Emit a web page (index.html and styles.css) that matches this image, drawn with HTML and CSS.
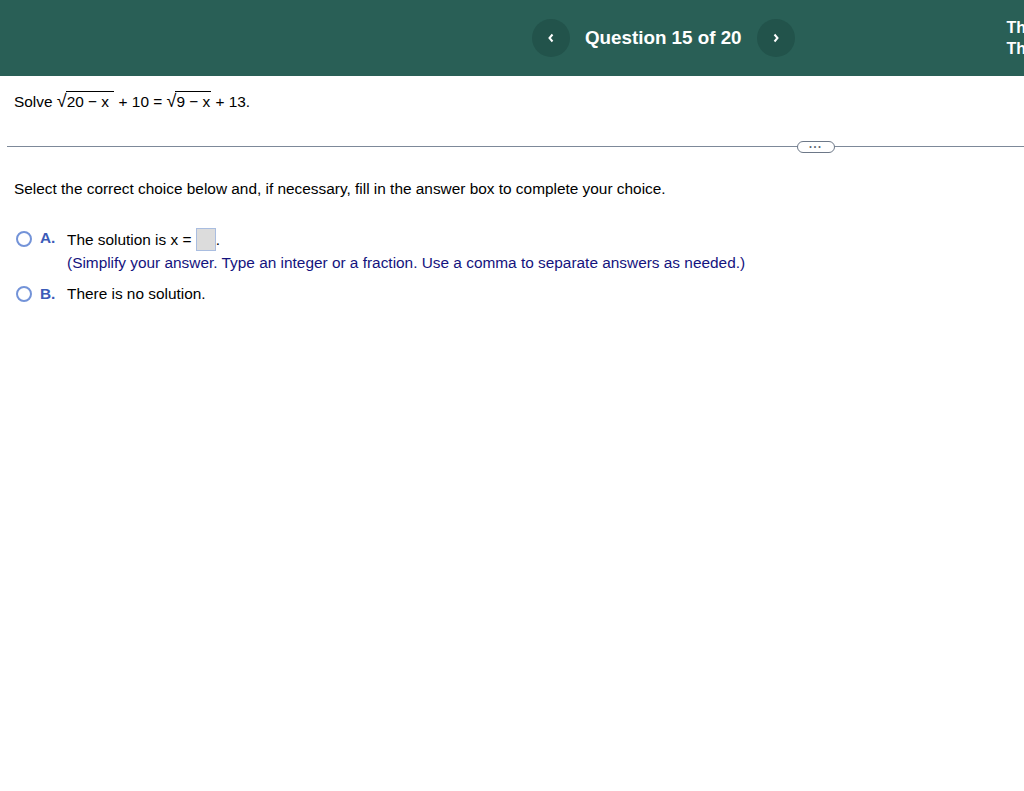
FILE: index.html
```html
<!DOCTYPE html>
<html>
<head>
    <meta charset="utf-8">
    <link rel="stylesheet" href="styles.css">
</head>
<body>
    <div class="header">
        <div class="nav">
            <span class="nav-btn">
                <svg width="10" height="10" viewBox="0 0 10 10"><polyline points="6.5,1.5 3.5,5 6.5,8.5" fill="none" stroke="#fff" stroke-width="2"/></svg>
            </span>
            <span class="nav-title">Question 15 of 20</span>
            <span class="nav-btn">
                <svg width="10" height="10" viewBox="0 0 10 10"><polyline points="3.5,1.5 6.5,5 3.5,8.5" fill="none" stroke="#fff" stroke-width="2"/></svg>
            </span>
        </div>
        <div class="header-side">
            <div>This question</div>
            <div>This test</div>
        </div>
    </div>

    <div class="question">
        Solve <span class="root"><span class="radical">&#8730;</span><span class="radicand">20 &minus; x&nbsp;</span></span> + 10 = <span class="root"><span class="radical">&#8730;</span><span class="radicand">9 &minus; x</span></span> + 13.
    </div>

    <div class="divider">
        <span class="more">&bull;&bull;&bull;</span>
    </div>

    <div class="prompt">Select the correct choice below and, if necessary, fill in the answer box to complete your choice.</div>

    <div class="choice choice-a">
        <span class="radio"></span>
        <span class="letter">A.</span>
        <div class="choice-body">
            <div class="answer-line">The solution is x = <span class="answer-box"></span>.</div>
            <div class="hint">(Simplify your answer. Type an integer or a fraction. Use a comma to separate answers as needed.)</div>
        </div>
    </div>

    <div class="choice">
        <span class="radio"></span>
        <span class="letter">B.</span>
        <div class="choice-body">There is no solution.</div>
    </div>
</body>
</html>
```

FILE: styles.css
```css
body {
    margin: 0;
    font-family: "Liberation Sans", Arial, sans-serif;
    font-size: 15.4px;
    line-height: 18px;
    color: #000;
    background: #fff;
}

.header {
    display: flex;
    align-items: center;
    height: 76px;
    background: #295f56;
    overflow: hidden;
    white-space: nowrap;
}

.nav {
    display: flex;
    align-items: center;
    margin-left: 532px;
}

.nav-btn {
    display: flex;
    align-items: center;
    justify-content: center;
    width: 38px;
    height: 38px;
    border-radius: 50%;
    background: #22534b;
}

.nav-title {
    margin: 0 15px 0 15px;
    color: #fff;
    font-size: 18.8px;
    font-weight: bold;
}

.header-side {
    margin-left: 212px;
    color: #fff;
    font-size: 16px;
    font-weight: bold;
    line-height: 21px;
}

.question {
    height: 70px;
    box-sizing: border-box;
    padding: 16px 0 0 14px;
}

.root {
    display: inline-block;
    white-space: nowrap;
}

.radical {
    font-size: 18px;
    margin-right: -1px;
}

.radicand {
    border-top: 1px solid #000;
    padding: 1px 1px 0 1px;
}

.divider {
    position: relative;
    margin-left: 7px;
    height: 0;
    border-top: 1px solid #7d8999;
}

.more {
    position: absolute;
    left: 790px;
    top: -6px;
    width: 36px;
    height: 10px;
    border: 1px solid #6d7888;
    border-radius: 6px;
    background: #fff;
    font-size: 7px;
    line-height: 10px;
    letter-spacing: 2px;
    text-align: center;
    color: #555f6d;
}

.prompt {
    padding: 33px 0 0 14px;
    margin-bottom: 30px;
}

.choice {
    display: flex;
    align-items: flex-start;
    padding-left: 16px;
}

.choice-a {
    margin-bottom: 13px;
}

.radio {
    width: 16px;
    height: 16px;
    border: 2px solid #7393d8;
    border-radius: 50%;
    box-sizing: border-box;
    margin-top: 1px;
    margin-right: 8px;
}

.letter {
    width: 27px;
    color: #3b5bb8;
    font-weight: bold;
}

.choice-a .radio {
    margin-top: 3px;
}

.choice-a .letter {
    line-height: 20px;
}

.answer-line {
    height: 23px;
    line-height: 23px;
}

.answer-box {
    display: inline-block;
    width: 20px;
    height: 23px;
    vertical-align: top;
    background: #dcdcdc;
    border: 1px solid #a9bde0;
    box-sizing: border-box;
}

.hint {
    margin-top: 3px;
    color: #14137e;
}
```
